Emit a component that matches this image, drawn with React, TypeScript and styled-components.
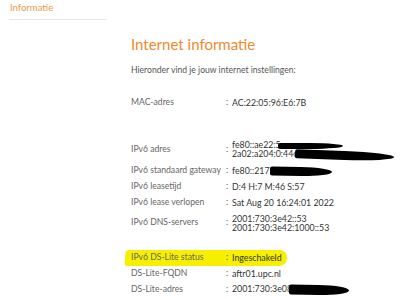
import React from 'react'
import styled, { createGlobalStyle } from 'styled-components'

const GlobalStyle = createGlobalStyle`
	html, body {
		margin: 0;
		padding: 0;
		background: #ffffff;
	}
	body {
		font-family: Lato, "Open Sans", "Liberation Sans", sans-serif;
		width: 400px;
		height: 299px;
		overflow: hidden;
	}
`

const Page = styled.div`
	display: flex;
	align-items: flex-start;
`

const Sidebar = styled.div`
	width: 98px;
	margin-left: 9px;
	padding-top: 2px;
	border-bottom: 1px solid #e6e6e6;
`

const Tab = styled.div`
	font-size: 9.5px;
	color: #ee9a4c;
	padding: 0 0 5px 1px;
	line-height: 12px;
`

const Content = styled.div`
	margin-left: 24px;
	padding-top: 35px;
	flex: 1;
`

const Title = styled.h1`
	margin: 0;
	font-weight: 400;
	font-size: 15px;
	line-height: 18px;
	color: #ee8a2e;
`

const Intro = styled.p`
	margin: 11px 0 19px;
	font-size: 8.6px;
	line-height: 12px;
	color: #555;
`

const Table = styled.div`
	display: flex;
	flex-direction: column;
`

const Row = styled.div<{ $mark?: boolean }>`
	display: grid;
	grid-template-columns: 95px 6px 1fr;
	align-items: center;
	padding: 3px 0;
	font-size: 8.6px;
	line-height: 9.8px;
	position: relative;
	${p => p.$mark && `
		&::before {
			content: '';
			position: absolute;
			left: -6px;
			width: 162px;
			top: 0px;
			bottom: 0px;
			background: #f6f000;
			border-radius: 4px 8px 7px 3px;
			transform: skewX(-4deg);
			z-index: 0;
		}
	`}
	& > * {
		position: relative;
		z-index: 1;
	}
`

const Spacer = styled.div<{ $h: number }>`
	height: ${p => p.$h}px;
`

const Label = styled.span`
	color: #666;
	white-space: nowrap;
`

const Colon = styled.span`
	color: #555;
`

const Value = styled.span`
	color: #333;
	font-size: 8.8px;
	white-space: nowrap;
`

const Line = styled.div`
	white-space: nowrap;
	line-height: 9.6px;
`

const Redact = styled.span<{ $w: number; $h: number; $tilt?: number; $dx?: number }>`
	display: inline-block;
	vertical-align: middle;
	width: ${p => p.$w}px;
	height: ${p => p.$h}px;
	margin-left: ${p => p.$dx ?? -2}px;
	background: #000;
	border-radius: 2px 50% 50% 2px / 2px 50% 50% 2px;
	transform: rotate(${p => p.$tilt ?? 0}deg);
`

const App: React.FC = () => {
	return (
		<>
			<GlobalStyle />
			<Page>
				<Sidebar>
					<Tab>Informatie</Tab>
				</Sidebar>
				<Content>
					<Title>Internet informatie</Title>
					<Intro>Hieronder vind je jouw internet instellingen:</Intro>
					<Table>
						<Row>
							<Label>MAC-adres</Label>
							<Colon>:</Colon>
							<Value>AC:22:05:96:E6:7B</Value>
						</Row>
						<Spacer $h={26} />
						<Row>
							<Label>IPv6 adres</Label>
							<Colon>:</Colon>
							<Value>
								<Line>fe80::ae22:5<Redact $w={65} $h={6} $dx={-3} /></Line>
								<Line>2a02:a204:0:44c<Redact $w={99} $h={9} $tilt={2} $dx={-2} /></Line>
							</Value>
						</Row>
						<Row>
							<Label>IPv6 standaard gateway</Label>
							<Colon>:</Colon>
							<Value>fe80::217<Redact $w={62} $h={9} $tilt={1} $dx={0} /></Value>
						</Row>
						<Row>
							<Label>IPv6 leasetijd</Label>
							<Colon>:</Colon>
							<Value>D:4 H:7 M:46 S:57</Value>
						</Row>
						<Row>
							<Label>IPv6 lease verlopen</Label>
							<Colon>:</Colon>
							<Value>Sat Aug 20 16:24:01 2022</Value>
						</Row>
						<Row>
							<Label>IPv6 DNS-servers</Label>
							<Colon>:</Colon>
							<Value>
								<Line>2001:730:3e42::53</Line>
								<Line>2001:730:3e42:1000::53</Line>
							</Value>
						</Row>
						<Spacer $h={14} />
						<Row $mark>
							<Label>IPv6 DS-Lite status</Label>
							<Colon>:</Colon>
							<Value>Ingeschakeld</Value>
						</Row>
						<Row>
							<Label>DS-Lite-FQDN</Label>
							<Colon>:</Colon>
							<Value>aftr01.upc.nl</Value>
						</Row>
						<Row>
							<Label>DS-Lite-adres</Label>
							<Colon>:</Colon>
							<Value>2001:730:3e08<Redact $w={60} $h={10} $tilt={1} $dx={-3} /></Value>
						</Row>
					</Table>
				</Content>
			</Page>
		</>
	)
}

export default App
